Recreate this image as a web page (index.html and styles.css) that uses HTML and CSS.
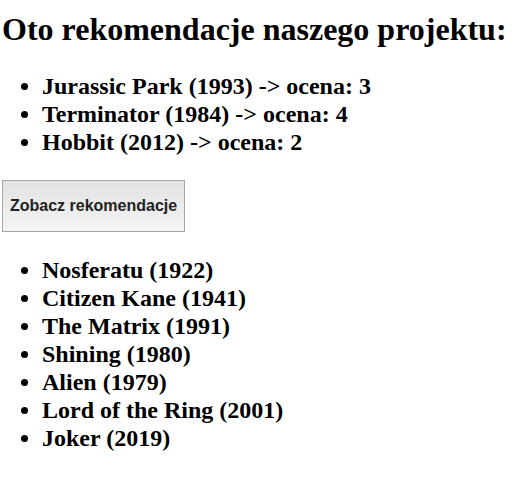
FILE: index.html
```html
<!DOCTYPE html>
<html lang="pl">
<head>
<meta charset="utf-8">
<title>Rekomendacje</title>
<link rel="stylesheet" href="styles.css">
</head>
<body>
<h1>Oto rekomendacje naszego projektu:</h1>
<ul class="films">
<li>Jurassic Park (1993) -&gt; ocena: 3</li>
<li>Terminator (1984) -&gt; ocena: 4</li>
<li>Hobbit (2012) -&gt; ocena: 2</li>
</ul>
<button class="show" type="button">Zobacz rekomendacje</button>
<ul class="films">
<li>Nosferatu (1922)</li>
<li>Citizen Kane (1941)</li>
<li>The Matrix (1991)</li>
<li>Shining (1980)</li>
<li>Alien (1979)</li>
<li>Lord of the Ring (2001)</li>
<li>Joker (2019)</li>
</ul>
</body>
</html>
```
FILE: styles.css
```css
body {
  margin: 0;
  padding: 11px 2px;
  background: #fff;
  color: #000;
  font-family: "Liberation Serif", "Times New Roman", serif;
}

h1 {
  margin: 0 0 25px;
  font-size: 32px;
  line-height: 36px;
  white-space: nowrap;
}

.films {
  margin: 0;
  padding-left: 40px;
  font-size: 24px;
  font-weight: bold;
  line-height: 28px;
}

.show {
  display: block;
  height: 52px;
  margin: 24px 0;
  padding: 0 7px;
  border: 1px solid #a6a6a6;
  border-radius: 0;
  background: linear-gradient(#e2e2e2, #f4f4f4);
  color: #222;
  font-family: "Liberation Sans", Arial, sans-serif;
  font-size: 16px;
  font-weight: bold;
}
```
